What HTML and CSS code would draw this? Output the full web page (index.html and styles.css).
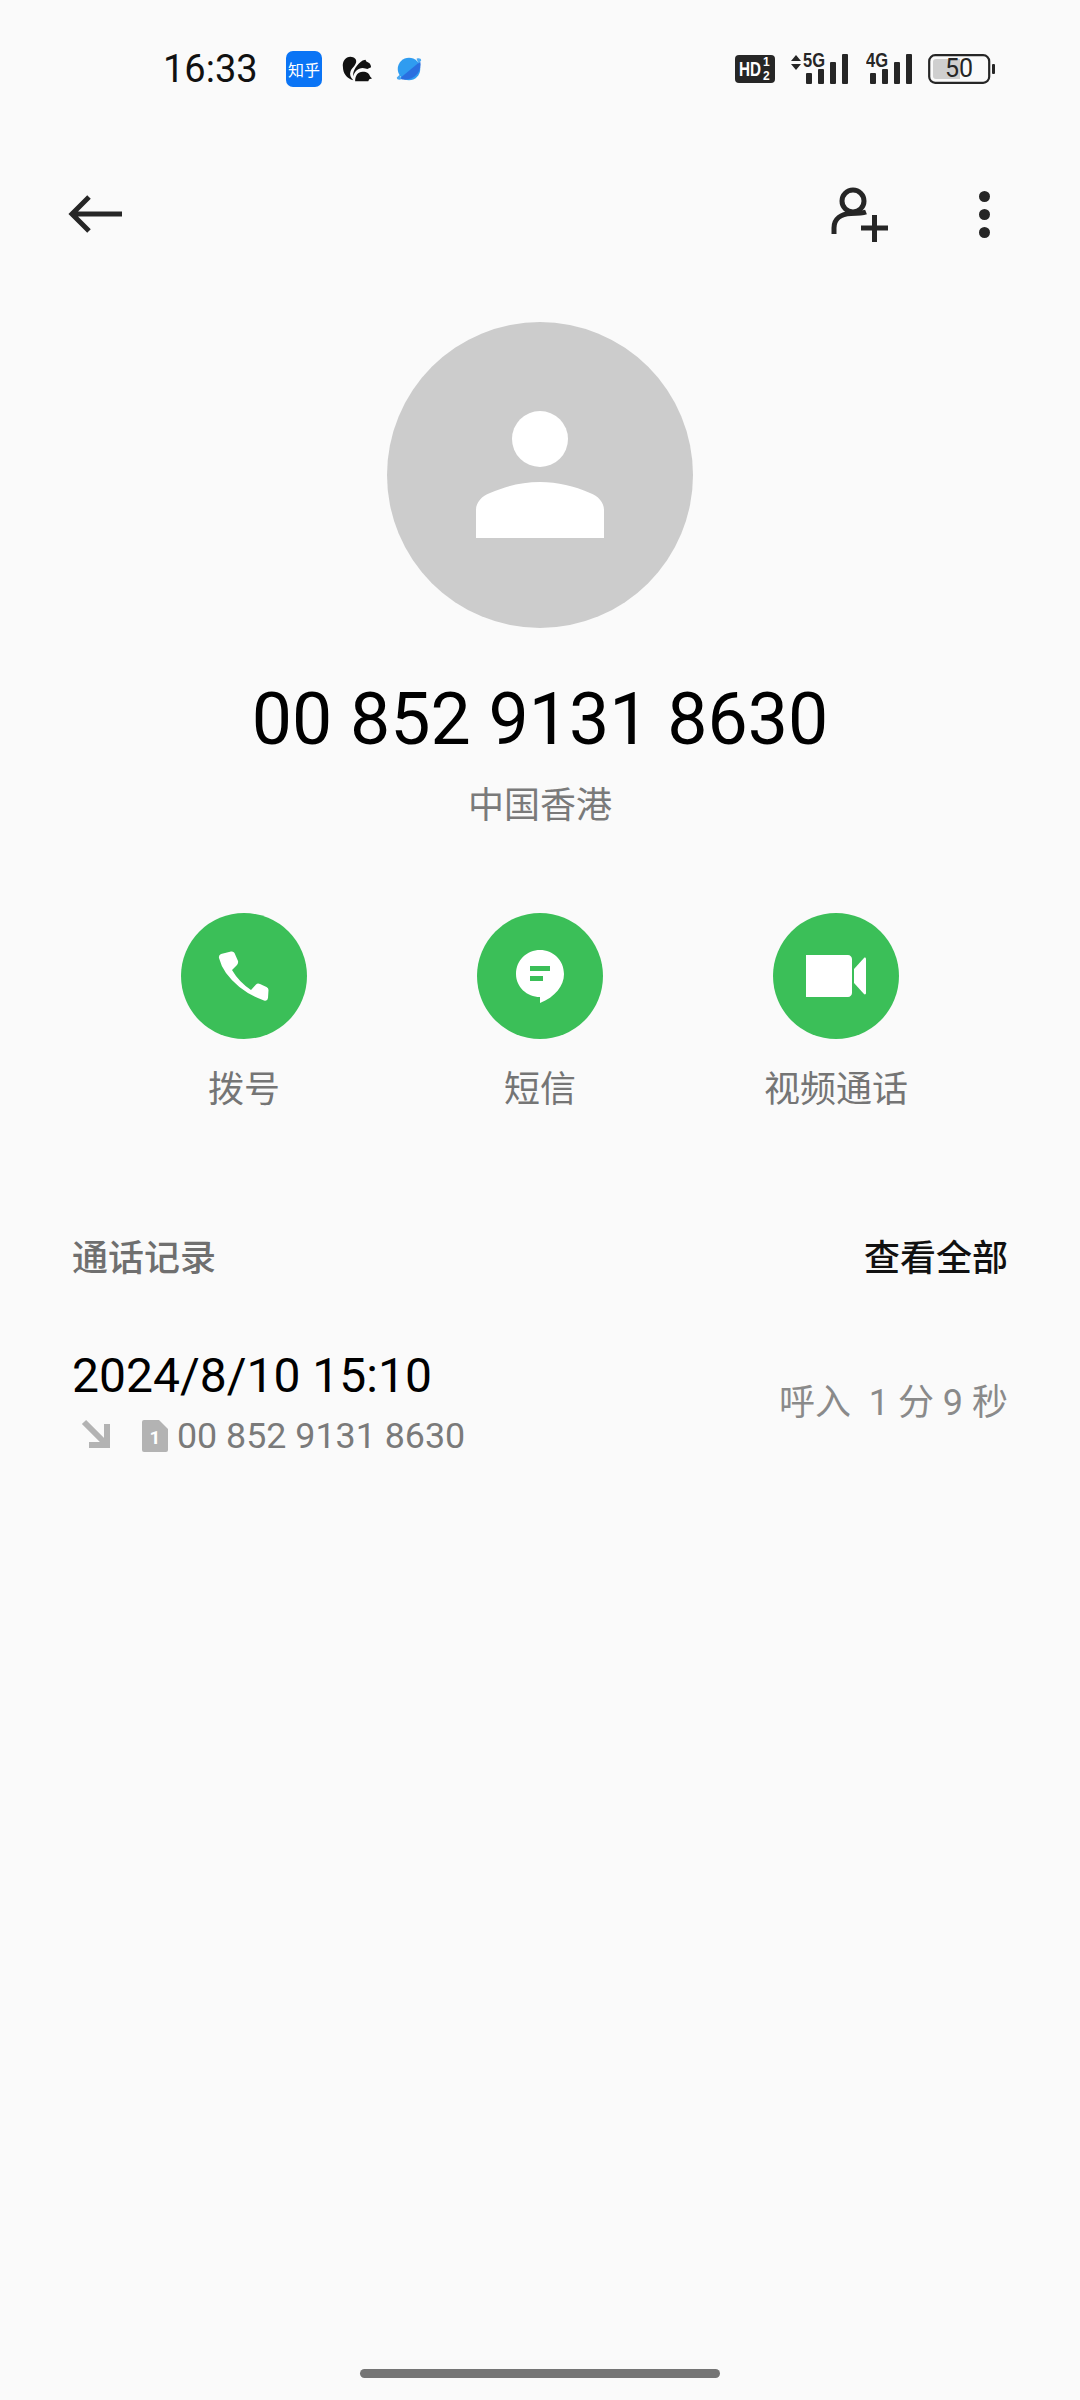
FILE: index.html
```html
<!DOCTYPE html>
<html>
<head>
  <title>通话详情</title>
  <link rel="stylesheet" href="styles.css">
</head>
<body>
  <div class="screen">
    <div class="status-bar">
      <div class="status-left">
        <span class="clock">16:33</span>
        <span class="app-zhihu">知乎</span>
        <svg class="app-squirrel" viewBox="0 0 32 28">
          <path d="M9 1C4 1 0 6 1 12c0 6 4 12 11 14-3-3-4-6-3-9 1-4 5-6 6-10 1-3-2-6-6-6z" fill="#111"/>
          <path d="M22 5l3-1 1 2c3 1 5 3 5 6l-4 2c-1 0-3-1-5-1-5 0-9 4-10 9-1-6 4-13 10-17z" fill="#111"/>
          <path d="M14 27c0-6 3-10 8-10s7 2 8 5l2 2-3 1-1 2z" fill="#111"/>
        </svg>
        <svg class="app-planet" viewBox="0 0 32 32">
          <circle cx="16" cy="16" r="12" fill="#2f9cf0"/>
          <path d="M6 26 28 8c1 4 0 9-3 13-5 6-13 8-19 5z" fill="#2a6fe0"/>
          <path d="M24 5c3-1 5 0 5 2l-3 3zM8 27c-3 1-5 0-5-2l3-3z" fill="#4aa8f2"/>
        </svg>
      </div>
      <div class="status-right">
        <svg class="hd-icon" viewBox="0 0 40 28">
          <rect width="40" height="28" rx="4" fill="#262626"/>
          <text x="4" y="21" class="hd-text" textLength="22" lengthAdjust="spacingAndGlyphs">HD</text>
          <text x="28" y="11" class="hd-small">1</text>
          <text x="28" y="25" class="hd-small">2</text>
        </svg>
        <svg class="net-icon net-5g" viewBox="0 -4 58 36">
          <path d="M1 8l5-6 5 6zM1 11h10l-5 6z" fill="#262626"/>
          <text x="13" y="14" class="net-text" textLength="22" lengthAdjust="spacingAndGlyphs">5G</text>
          <rect x="16" y="20" width="6" height="11" rx="1" fill="#262626"/>
          <rect x="28" y="16" width="6" height="15" rx="1" fill="#262626"/>
          <rect x="40" y="9" width="6" height="22" rx="1" fill="#262626"/>
          <rect x="52" y="1" width="6" height="30" rx="1" fill="#262626"/>
        </svg>
        <svg class="net-icon net-4g" viewBox="0 -4 46 36">
          <text x="0" y="14" class="net-text" textLength="22" lengthAdjust="spacingAndGlyphs">4G</text>
          <rect x="4" y="20" width="6" height="11" rx="1" fill="#262626"/>
          <rect x="16" y="16" width="6" height="15" rx="1" fill="#262626"/>
          <rect x="28" y="9" width="6" height="22" rx="1" fill="#262626"/>
          <rect x="40" y="1" width="6" height="30" rx="1" fill="#262626"/>
        </svg>
        <svg class="battery" viewBox="0 0 67 30">
          <rect x="1.200" y="1.200" width="60" height="27.600" rx="6" fill="none" stroke="#262626" stroke-width="2.200"/>
          <path d="M5 8a3 3 0 0 1 3-3h24v20H8a3 3 0 0 1-3-3z" fill="#cfcfcf"/>
          <rect x="64" y="10" width="3" height="10" rx="1" fill="#262626"/>
          <text x="31" y="23" class="battery-text">50</text>
        </svg>
      </div>
    </div>

    <div class="top-bar">
      <svg class="back-icon" viewBox="0 0 56 44">
        <path d="M54 22H4M21 5 4 22l17 17" fill="none" stroke="#262626" stroke-width="5"/>
      </svg>
      <div class="top-actions">
        <svg class="add-icon" viewBox="0 0 60 58">
          <circle cx="24" cy="16" r="11" fill="none" stroke="#262626" stroke-width="5"/>
          <path d="M5 49v-6C5 34 12 29 22 28.500c6 0 11 0 15-1.500" fill="none" stroke="#262626" stroke-width="5"/>
          <path d="M32 43h27M45.500 30v27" fill="none" stroke="#262626" stroke-width="5"/>
        </svg>
        <div class="more-dots"><i></i><i></i><i></i></div>
      </div>
    </div>

    <div class="contact">
      <div class="avatar">
        <svg class="avatar-icon" viewBox="0 0 128 128">
          <circle cx="64" cy="28" r="28" fill="#fff"/>
          <path d="M0 127V99c0-8 6-14 14-17 16-7 32-11 50-11s34 4 50 11c8 3 14 9 14 17v28z" fill="#fff"/>
        </svg>
      </div>
      <div class="number">00 852 9131 8630</div>
      <div class="region">中国香港</div>
    </div>

    <div class="actions">
      <div class="action">
        <div class="action-circle">
          <svg viewBox="12 9 54 54" class="phone-icon">
            <path d="M16 14l10-2.500q2.500-.5 3.500 1.500l3.500 8q.5 2-1 4l-5 5q7 12 19 20l5-5.500q1.500-1.500 4-.5l6.500 3q2 1 2 3l-.5 8q-.5 3.500-4 2.500Q35 52 21 33q-5-7-7-15-.5-3 2-4z" fill="#fff"/>
          </svg>
        </div>
        <span>拨号</span>
      </div>
      <div class="action">
        <div class="action-circle">
          <svg viewBox="0 0 48 53" class="message-icon">
            <path d="M24 0c13 0 24 10 24 24 0 12-9 23-24 29v-6C11 47 0 37 0 24 0 10 11 0 24 0z" fill="#fff"/>
            <rect x="14" y="16" width="20" height="5" fill="#3bbf58"/>
            <rect x="14" y="26" width="13" height="5" fill="#3bbf58"/>
          </svg>
        </div>
        <span>短信</span>
      </div>
      <div class="action">
        <div class="action-circle">
          <svg viewBox="0 0 60 42" class="video-icon">
            <path d="M0 0h42c2 0 4 2 4 4v34c0 2-2 4-4 4H0z" fill="#fff"/>
            <path d="M48 14 58 3c1-1 2 0 2 1v34c0 1-1 2-2 1L48 28z" fill="#fff"/>
          </svg>
        </div>
        <span>视频通话</span>
      </div>
    </div>

    <div class="log-head">
      <span class="log-title">通话记录</span>
      <span class="log-all">查看全部</span>
    </div>

    <div class="log-row">
      <div class="log-info">
        <div class="log-date">2024/8/10 15:10</div>
        <div class="log-meta">
          <svg class="in-icon" viewBox="0 0 30 30">
            <path d="M3 3l21 21M26 5v21H8" fill="none" stroke="#b3b3b3" stroke-width="6"/>
          </svg>
          <svg class="sim-icon" viewBox="0 0 26 32">
            <path d="M2 0h15l9 9v21a2 2 0 0 1-2 2H2a2 2 0 0 1-2-2V2a2 2 0 0 1 2-2z" fill="#b3b3b3"/>
            <text x="13" y="24" class="sim-text">1</text>
          </svg>
          <span>00 852 9131 8630</span>
        </div>
      </div>
      <div class="log-length">呼入&nbsp;&nbsp;1 分 9 秒</div>
    </div>

    <div class="home-bar"></div>
  </div>
</body>
</html>
```

FILE: styles.css
```css
body {
  margin: 0;
  padding: 0;
  background-color: #fafafa;
  font-family: Roboto, "Noto Sans CJK SC", sans-serif;
}

.screen {
  position: relative;
  width: 1080px;
  height: 2400px;
  overflow: hidden;
  background-color: #fafafa;
}

/* status bar */
.status-bar {
  display: flex;
  justify-content: space-between;
  align-items: center;
  height: 48px;
  padding: 45px 85px 0 163px;
}

.status-left {
  display: flex;
  align-items: center;
}

.clock {
  width: 123px;
  font-size: 38px;
  color: #111;
}

.app-zhihu {
  display: flex;
  align-items: center;
  justify-content: center;
  width: 36px;
  height: 36px;
  margin-right: 20px;
  border-radius: 7px;
  background-color: #0a74f5;
  color: #fff;
  font-size: 16px;
}

.app-squirrel {
  width: 30px;
  height: 28px;
  margin-right: 22px;
}

.app-planet {
  width: 30px;
  height: 30px;
}

.status-right {
  display: flex;
  align-items: center;
}

.hd-icon {
  width: 40px;
  height: 28px;
  margin-right: 15px;
}

.hd-text {
  font: bold 21px "Liberation Sans", sans-serif;
  fill: #fff;
}

.hd-small {
  font: bold 12px "Liberation Sans", sans-serif;
  fill: #fff;
}

.net-icon {
  height: 36px;
  margin-top: -4px;
}

.net-5g {
  width: 58px;
  margin-right: 18px;
}

.net-4g {
  width: 46px;
  margin-right: 16px;
}

.net-text {
  font: bold 20px "Liberation Sans", sans-serif;
  fill: #262626;
}

.battery {
  width: 67px;
  height: 30px;
}

.battery-text {
  font: 25px Roboto, sans-serif;
  fill: #262626;
  text-anchor: middle;
}

.sim-text {
  font: bold 19px Roboto, sans-serif;
  fill: #fff;
  text-anchor: middle;
}

/* toolbar */
.top-bar {
  display: flex;
  justify-content: space-between;
  align-items: center;
  height: 60px;
  padding: 91px 90px 0 68px;
}

.back-icon {
  width: 56px;
  height: 44px;
}

.top-actions {
  display: flex;
  align-items: center;
}

.add-icon {
  width: 60px;
  height: 58px;
  margin-right: 90px;
}

.more-dots {
  display: flex;
  flex-direction: column;
  gap: 7px;
}

.more-dots i {
  display: block;
  width: 11px;
  height: 11px;
  border-radius: 50%;
  background-color: #262626;
}

/* contact header */
.contact {
  display: flex;
  flex-direction: column;
  align-items: center;
  margin-top: 78px;
}

.avatar {
  display: flex;
  align-items: center;
  justify-content: center;
  width: 306px;
  height: 306px;
  border-radius: 50%;
  background-color: #cccccc;
}

.avatar-icon {
  width: 128px;
  height: 128px;
  margin-top: -1px;
}

.number {
  margin-top: 50px;
  font-size: 71.600px;
  line-height: 84px;
  color: #000;
}

.region {
  margin-top: 21px;
  font-size: 36px;
  line-height: 46px;
  color: #7a7a7a;
}

/* call, message, video */
.actions {
  display: grid;
  grid-template-columns: repeat(3, 296px);
  justify-content: center;
  margin-top: 84px;
}

.action {
  display: flex;
  flex-direction: column;
  align-items: center;
  font-size: 36px;
  line-height: 46px;
  color: #757575;
}

.action-circle {
  display: flex;
  align-items: center;
  justify-content: center;
  width: 126px;
  height: 126px;
  margin-bottom: 28px;
  border-radius: 50%;
  background-color: #3bbf58;
}

.phone-icon {
  width: 54px;
  height: 54px;
}

.message-icon {
  width: 48px;
  height: 53px;
}

.video-icon {
  width: 60px;
  height: 42px;
}

/* call log */
.log-head {
  display: flex;
  justify-content: space-between;
  margin-top: 123px;
  padding: 0 72px;
  font-size: 36px;
  line-height: 46px;
}

.log-title {
  font-weight: 500;
  color: #6f6f6f;
}

.log-all {
  font-weight: 500;
  color: #111;
}

.log-row {
  display: flex;
  justify-content: space-between;
  align-items: center;
  margin-top: 66px;
  padding: 0 72px;
}

.log-date {
  font-size: 48px;
  line-height: 56px;
  color: #000;
}

.log-meta {
  display: flex;
  align-items: center;
  margin-top: 9px;
  font-size: 35.800px;
  line-height: 46px;
  color: #7a7a7a;
}

.in-icon {
  width: 30px;
  height: 30px;
  margin: 0 31px 4px 9px;
}

.sim-icon {
  width: 26px;
  height: 32px;
  margin-right: 9px;
}

.log-length {
  margin-bottom: 10px;
  font-size: 36px;
  color: #8a8a8a;
}

.home-bar {
  position: absolute;
  left: 360px;
  bottom: 22px;
  width: 360px;
  height: 9px;
  border-radius: 5px;
  background-color: #757575;
}
```
